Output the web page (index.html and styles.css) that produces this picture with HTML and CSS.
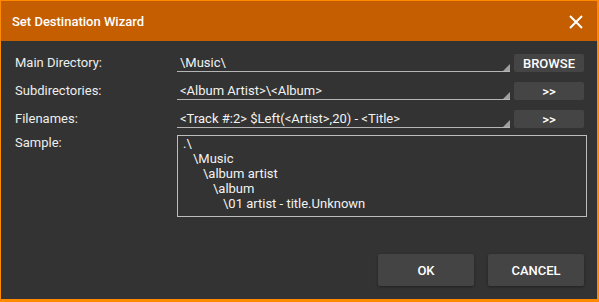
FILE: index.html
```html
<!DOCTYPE html>
<html lang="en">
<head>
    <meta charset="UTF-8">
    <title>Set Destination Wizard</title>
    <link rel="stylesheet" href="styles.css">
</head>
<body>
    <div class="dialog">
        <!-- Title bar -->
        <div class="title-bar">
            <span class="title">Set Destination Wizard</span>
            <svg class="close" width="16" height="16" viewBox="0 0 16 16">
                <path d="M2 2 L14 14 M14 2 L2 14" stroke="#fff" stroke-width="2" fill="none"/>
            </svg>
        </div>

        <!-- Form -->
        <div class="content">
            <div class="form">
                <label class="label">Main Directory:</label>
                <div class="field"><span>\Music\</span><i class="grip"></i></div>
                <button class="small-button">BROWSE</button>

                <label class="label">Subdirectories:</label>
                <div class="field"><span>&lt;Album Artist&gt;\&lt;Album&gt;</span><i class="grip"></i></div>
                <button class="small-button">&gt;&gt;</button>

                <label class="label">Filenames:</label>
                <div class="field"><span>&lt;Track #:2&gt; $Left(&lt;Artist&gt;,20) - &lt;Title&gt;</span><i class="grip"></i></div>
                <button class="small-button">&gt;&gt;</button>

                <label class="label sample-label">Sample:</label>
                <div class="sample">
                    <div class="l0">.\</div>
                    <div class="l1">\Music</div>
                    <div class="l2">\album artist</div>
                    <div class="l3">\album</div>
                    <div class="l4">\01 artist - title.Unknown</div>
                </div>
            </div>

            <div class="actions">
                <button class="big-button">OK</button>
                <button class="big-button">CANCEL</button>
            </div>
        </div>
    </div>
</body>
</html>
```

FILE: styles.css
```css
* {
    margin: 0;
    padding: 0;
    box-sizing: border-box;
    font-family: Roboto, "Liberation Sans", sans-serif;
}

body {
    background-color: #333;
    width: 599px;
    height: 302px;
    overflow: hidden;
}

.dialog {
    width: 599px;
    height: 302px;
    border-style: solid;
    border-color: #ff8a00;
    border-width: 1px 2px 3px 1px;
    background-color: #333;
    display: flex;
    flex-direction: column;
}

.title-bar {
    height: 40px;
    background-color: #c45e00;
    display: flex;
    align-items: center;
    justify-content: space-between;
    padding: 0 13px 0 11px;
}

.title {
    color: #fff;
    font-size: 13px;
    font-weight: 500;
    margin-top: 1px;
}

.close {
    margin-top: 2px;
}

.content {
    flex: 1;
    padding: 13px 13px 0 14px;
    display: flex;
    flex-direction: column;
}

.form {
    display: grid;
    grid-template-columns: 158px 333px 70px;
    column-gap: 4px;
    row-gap: 10px;
    grid-auto-rows: 18px;
}

.label {
    color: #eee;
    font-size: 13px;
    line-height: 18px;
}

.field {
    position: relative;
    border-bottom: 1px solid #b5b5b5;
    color: #f2f2f2;
    font-size: 13px;
    line-height: 17px;
    padding-left: 3px;
    white-space: nowrap;
}

.grip {
    position: absolute;
    right: 0;
    bottom: 0;
    width: 0;
    height: 0;
    border-style: solid;
    border-width: 0 0 7px 7px;
    border-color: transparent transparent #a0a0a0 transparent;
}

.small-button {
    background-color: #454545;
    color: #fff;
    border: none;
    border-radius: 2px;
    font-size: 13px;
    font-weight: 500;
    height: 18px;
}

.sample-label {
    margin-top: -4px;
}

.sample {
    grid-column: 2 / 4;
    grid-row: span 4;
    margin-top: -3px;
    margin-right: -3px;
    height: 82px;
    border: 1px solid #bdbdbd;
    color: #f2f2f2;
    font-size: 13px;
    line-height: 15px;
    padding: 0 0 0 5px;
}

.l1 { padding-left: 10px; }
.l2 { padding-left: 20px; }
.l3 { padding-left: 30px; }
.l4 { padding-left: 40px; }

.actions {
    margin-top: auto;
    margin-bottom: 13px;
    display: flex;
    justify-content: flex-end;
    gap: 14px;
}

.big-button {
    width: 96px;
    height: 32px;
    background-color: #444;
    color: #fff;
    border: none;
    border-radius: 2px;
    box-shadow: 0 1px 3px rgba(0, 0, 0, 0.35);
    font-size: 13px;
    font-weight: 500;
}
```
